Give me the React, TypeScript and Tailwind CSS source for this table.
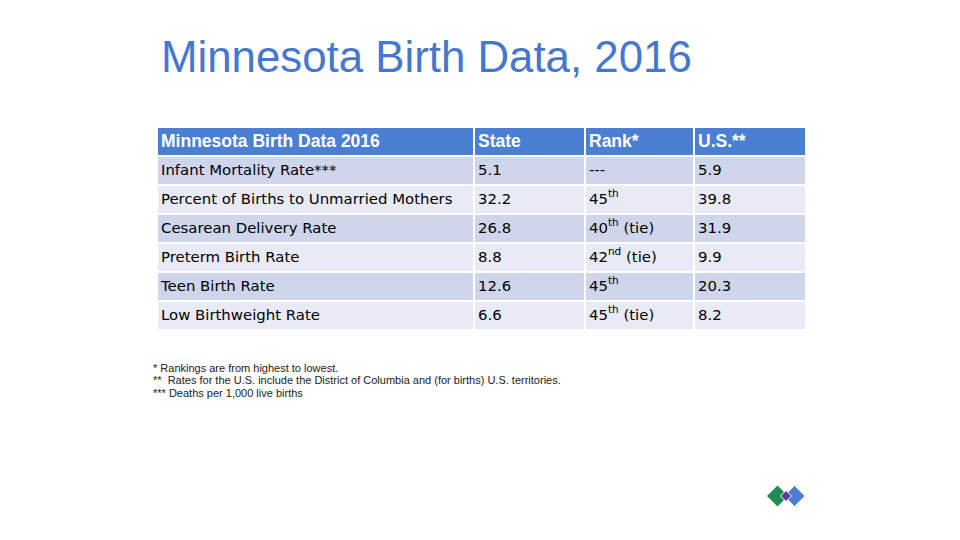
import React from 'react';

type Row = { label: string; state: string; rank: React.ReactNode; us: string };

const sup = (n: string, s: string, tie = false) => (
  <>
    {n}
    <sup className="relative top-[-1px] align-super text-[10.5px]">{s}</sup>
    {tie ? ' (tie)' : ''}
  </>
);

const rows: Row[] = [
  { label: 'Infant Mortality Rate***', state: '5.1', rank: '---', us: '5.9' },
  { label: 'Percent of Births to Unmarried Mothers', state: '32.2', rank: sup('45', 'th'), us: '39.8' },
  { label: 'Cesarean Delivery Rate', state: '26.8', rank: sup('40', 'th', true), us: '31.9' },
  { label: 'Preterm Birth Rate', state: '8.8', rank: sup('42', 'nd', true), us: '9.9' },
  { label: 'Teen Birth Rate', state: '12.6', rank: sup('45', 'th'), us: '20.3' },
  { label: 'Low Birthweight Rate', state: '6.6', rank: sup('45', 'th', true), us: '8.2' },
];

function Logo() {
  return (
    <svg width="38" height="26" viewBox="0 0 38 26">
      <polygon points="0,13 10.5,2.5 21,13 10.5,23.5" fill="#1e8c4e" />
      <polygon points="17,13 27.5,2.5 38,13 27.5,23.5" fill="#4a7fd4" stroke="#fff" strokeWidth="1" />
      <polygon points="13.5,13 19,7.5 24.5,13 19,18.5" fill="#5b3f9e" stroke="#fff" strokeWidth="1" />
    </svg>
  );
}

export default function App() {
  return (
    <div className="flex h-[540px] w-[960px] flex-col bg-white font-['Liberation_Sans',Arial,sans-serif]">
      <h1 className="ml-[161px] mt-[35px] text-[43.8px] leading-none text-[#4677cf]">
        Minnesota Birth Data, 2016
      </h1>

      <div className="ml-[158px] mt-[49px] grid w-[647px] grid-cols-[315px_109px_107px_110px] gap-[2px]">
        {['Minnesota Birth Data 2016', 'State', 'Rank*', 'U.S.**'].map((h) => (
          <div
            key={h}
            className="flex h-[27px] items-center bg-[#4a7fd4] pl-[3px] text-[17.5px] font-bold text-white"
          >
            {h}
          </div>
        ))}
        {rows.map((r, i) => {
          const bg = i % 2 === 0 ? 'bg-[#cfd6ec]' : 'bg-[#e8ebf5]';
          return [r.label, r.state, r.rank, r.us].map((c, j) => (
            <div
              key={`${i}-${j}`}
              className={`flex h-[27px] items-center pl-[3px] font-['DejaVu_Sans',sans-serif] text-[14.9px] text-black ${bg}`}
            >
              <span>{c}</span>
            </div>
          ));
        })}
      </div>

      <div className="ml-[153px] mt-[33px] text-[11px] leading-[12.5px] text-[#222]">
        <p>* Rankings are from highest to lowest.</p>
        <p>**&nbsp; Rates for the U.S. include the District of Columbia and (for births) U.S. territories.</p>
        <p>*** Deaths per 1,000 live births</p>
      </div>

      <div className="flex flex-1 items-end justify-end pb-[31px] pr-[155px]">
        <Logo />
      </div>
    </div>
  );
}
